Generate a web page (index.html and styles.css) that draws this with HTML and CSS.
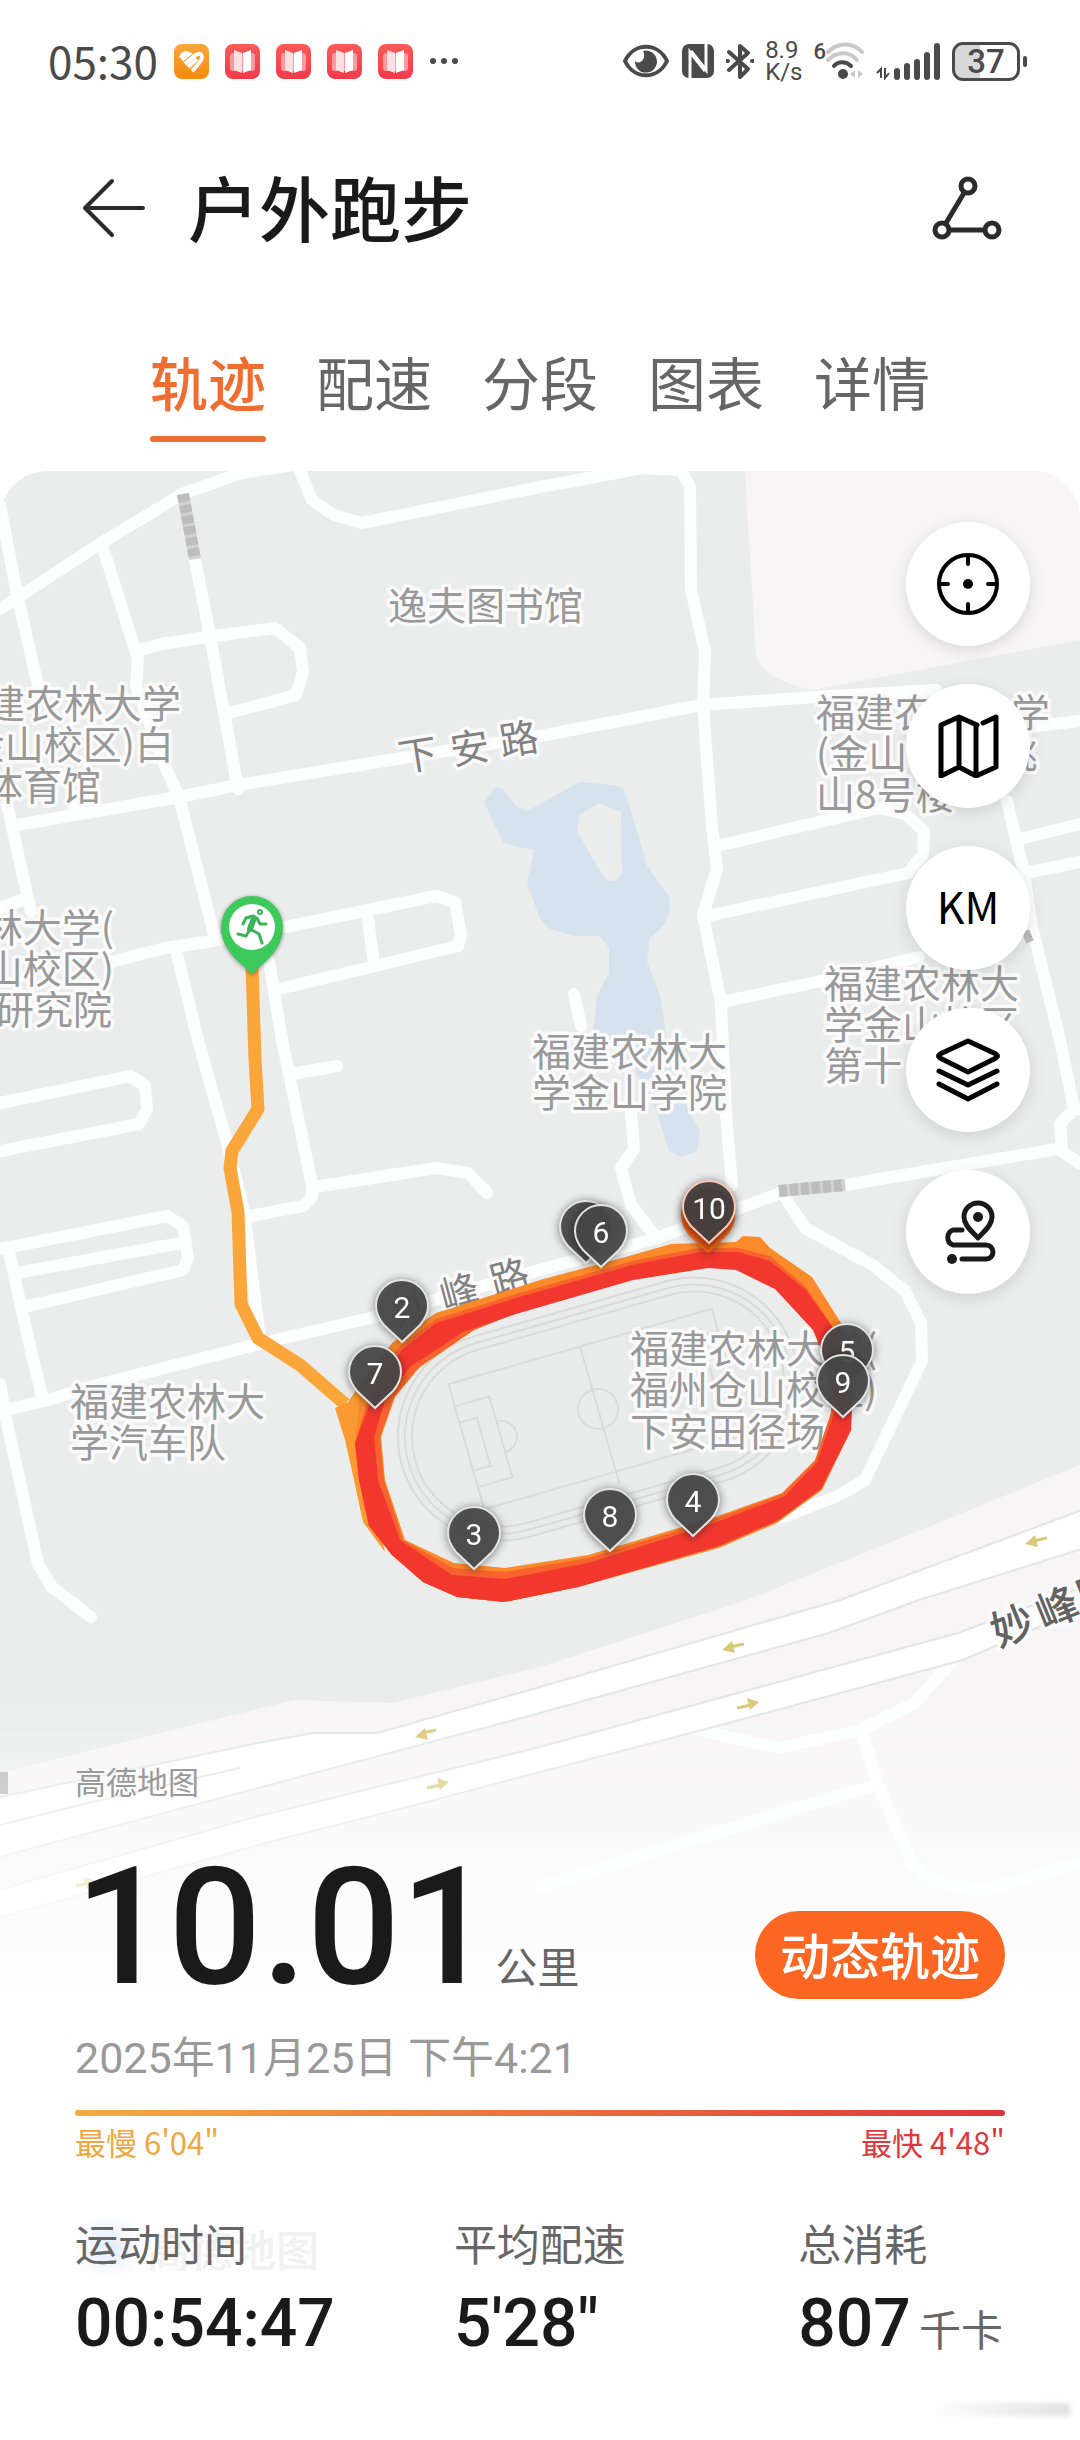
FILE: index.html
```html
<!DOCTYPE html>
<html lang="zh-CN">
<head>
  <meta charset="UTF-8">
  <meta name="viewport" content="width=device-width, initial-scale=1.0">
  <title>户外跑步</title>
  <link rel="stylesheet" href="styles.css">
</head>
<body>
  <svg class="defs" width="0" height="0" aria-hidden="true">
    <defs>
      <linearGradient id="redApp" x1="0" y1="0" x2="0" y2="1">
        <stop offset="0" stop-color="#fb5a57"/>
        <stop offset="1" stop-color="#f23a4b"/>
      </linearGradient>
      <linearGradient id="orangeApp" x1="0" y1="0" x2="0" y2="1">
        <stop offset="0" stop-color="#f7a63c"/>
        <stop offset="1" stop-color="#f58a0c"/>
      </linearGradient>
      <symbol id="book" viewBox="0 0 35 35">
        <rect width="35" height="35" rx="8" fill="url(#redApp)"/>
        <rect x="5" y="9" width="25" height="18" rx="3" fill="#fb9aa0"/>
        <path d="M9 6l8 3v20l-8-3z" fill="#ffdfe2"/>
        <path d="M26 6l-8 3v20l8-3z" fill="#fff"/>
      </symbol>
      <symbol id="pin" viewBox="-40 -40 80 90" overflow="visible">
        <path d="M0 35L-18 18C-23 12-26 6-26-1A26 26 0 0 1 26-1C26 6 23 12 18 18Z"/>
      </symbol>
    </defs>
  </svg>

  <div class="statusbar">
    <div class="status-left">
      <span class="time">05:30</span>
      <svg class="app" viewBox="0 0 35 35">
        <rect width="35" height="35" rx="8" fill="url(#orangeApp)"/>
        <path d="M7 14Q9 7 15 10L8 16M11 20L20 12Q27 7 28 13Q28 17 18 27M14 23L23 15" stroke="#fff" stroke-width="4" fill="none"/>
      </svg>
      <svg class="app"><use href="#book"/></svg>
      <svg class="app"><use href="#book"/></svg>
      <svg class="app"><use href="#book"/></svg>
      <svg class="app"><use href="#book"/></svg>
      <svg class="dots" width="30" height="8" viewBox="0 0 30 8" fill="#4a4a4a">
        <circle cx="4" cy="4" r="3"/><circle cx="15" cy="4" r="3"/><circle cx="26" cy="4" r="3"/>
      </svg>
    </div>
    <div class="status-right">
      <svg width="48" height="36" viewBox="0 0 48 36">
        <path d="M3 18C12-1 36-1 45 18C36 37 12 37 3 18Z" fill="none" stroke="#4a4a4a" stroke-width="4"/>
        <path d="M21 8a11 11 0 1 1-8 10c5 5 12-3 8-10z" fill="#4a4a4a"/>
      </svg>
      <svg width="34" height="36" viewBox="0 0 34 36">
        <rect x="1" y="1" width="32" height="34" rx="7" fill="#4a4a4a"/>
        <path d="M9 35V9l15 19M25 1v26L10 8" fill="none" stroke="#fff" stroke-width="3"/>
      </svg>
      <svg width="28" height="36" viewBox="0 0 28 36" fill="none" stroke="#4a4a4a" stroke-width="4" stroke-linejoin="round" stroke-linecap="round">
        <path d="M3 9l19 17-8 8V3l8 7L3 27"/>
        <path d="M1 18h1M26 18h1"/>
      </svg>
      <div class="speed"><span>8.9</span><span>K/s</span></div>
      <div class="wifi">
        <span>6</span>
        <svg width="38" height="38" viewBox="1 0 38 38" fill="none" stroke-linecap="round">
          <path d="M3 10C13 0 28 0 37 10M3 18C12 9 25 9 32 18" stroke="#c9c9c9" stroke-width="4"/>
          <path d="M9 24c4-5 12-5 17 0" stroke="#4a4a4a" stroke-width="4"/>
          <circle cx="18" cy="32" r="5" fill="#4a4a4a"/>
          <path d="M30 28v8l-5-4zM33 28v8l5-4z" fill="#c9c9c9"/>
        </svg>
      </div>
      <svg width="66" height="38" viewBox="0 0 66 38" stroke="#4a4a4a" fill="none">
        <path d="M6 36V27l-4 4M10 26v10l4-5" stroke-width="2"/>
        <path d="M22 29v6M32 24v11M42 20v15M52 13v22M62 4v31" stroke-width="6" stroke-linecap="round"/>
      </svg>
      <div class="battery"><span>37</span></div>
    </div>
  </div>

  <header class="header">
    <button class="icon-btn" aria-label="返回">
      <svg width="64" height="60" viewBox="0 0 64 60" fill="none" stroke="#2b2b2b" stroke-width="4" stroke-linecap="round" stroke-linejoin="round">
        <path d="M30 3L3 30L30 57M3 30h58"/>
      </svg>
    </button>
    <h1>户外跑步</h1>
    <button class="icon-btn share" aria-label="分享">
      <svg width="70" height="64" viewBox="0 0 70 64" fill="none" stroke="#2b2b2b" stroke-width="5">
        <circle cx="36" cy="10" r="7"/><circle cx="10" cy="54" r="7"/><circle cx="60" cy="54" r="7"/>
        <path d="M32 17L14 47M18 54h34"/>
      </svg>
    </button>
  </header>

  <nav class="tabs">
    <a href="#track" class="active">轨迹</a>
    <a href="#pace">配速</a>
    <a href="#split">分段</a>
    <a href="#chart">图表</a>
    <a href="#detail">详情</a>
  </nav>

  <main class="map" id="track">
    <svg class="map-canvas" viewBox="0 471 1080 1969" preserveAspectRatio="xMidYMin slice">
      <rect y="471" width="1080" height="1969" fill="#ebedec"/>
      <path class="land" d="M745 471L756 657Q765 680 812 690L1080 640V471Z"/>
      <path class="land" d="M1080 1465L884 1545L747 1600L540 1667L393 1703L294 1700L0 1773V2440H1080Z"/>

      <!-- 湖 -->
      <path fill="#d6e2ee" fill-rule="evenodd" d="M496 787L484 802L503 843L534 850L527 883L540 919L550 929L574 936H600L609 948V973L597 996L593 1034L630 1060L657 1113L669 1151L681 1157L697 1151L700 1132L688 1109L668 1060L664 1019L660 996L647 961L650 938L664 925L670 912L669 896L647 866L635 824L624 789L614 785L580 782L540 804L527 811L516 806L503 789Z
        M599 803L621 812L622 873L616 881H607L597 866L577 831L580 814Z"/>

      <!-- 小路 -->
      <g class="road">
        <path d="M0 609L17 598L103 542L182 494L241 473L293 465"/>
        <path d="M0 505L17 594L38 686"/>
        <path d="M103 548L138 659L136 686L165 766L179 797L215 938"/>
        <path d="M195 560L210 636L238 789"/>
        <path d="M136 651L162 644L207 637L275 628L300 648L303 672L296 695L229 713"/>
        <path d="M17 825L179 797L238 785L396 759L540 736L702 705L815 697L936 690L960 735L1080 721"/>
        <path d="M300 471L312 500L334 515L362 523L540 487L643 468L681 470L690 487L691 590L705 651L703 705L712 827L717 869L703 915L721 1003L726 1113L732 1185"/>
        <path d="M721 845L879 808L905 814L924 831L923 854L908 873L712 915"/>
        <path d="M726 1001L826 980L919 957"/>
        <path d="M1007 801L1024 873L1032 927L1060 1040L1074 1109L1060 1124L1062 1151L1080 1164M1074 1109H1084"/>
        <path d="M1019 839L1080 824M1026 873L1080 862"/>
        <path d="M7 804L31 912M0 908L28 898M72 800L75 812"/>
        <path d="M114 961L165 948L220 940M286 927L436 896L455 902L461 935L458 946L275 990M367 912L374 965"/>
        <path d="M177 954L198 1040L227 1143L244 1212L260 1338"/>
        <path d="M269 961L282 1040L312 1185V1197L303 1206L251 1216M291 1074L337 1066"/>
        <path d="M315 1187L436 1168L468 1173L487 1193"/>
        <path d="M0 1103L131 1076L145 1086L147 1109L139 1124L0 1151"/>
        <path d="M0 1249L167 1216L183 1226L188 1258L183 1270L28 1306M17 1273L181 1243M9 1252L28 1338L43 1400"/>
        <path d="M0 1411L48 1400L93 1386L275 1340L375 1317L540 1270L654 1239L781 1193M845 1185L1057 1149"/>
        <path d="M0 1384L7 1423L38 1564L52 1587L91 1617"/>
        <path d="M574 994L581 1026M631 1113L634 1149L621 1168L631 1205L657 1239"/>
        <path d="M786 1199L805 1228L874 1266L905 1291L921 1323L922 1361L865 1480L840 1495L781 1518"/>
        <path d="M698 1730L778 1748L860 1730L915 1703L953 1660M862 1733L879 1787L912 1863L936 1883L984 1890L1080 1863M877 1785L781 1813L540 1887"/>
      </g>
      <g fill="none" stroke-width="12">
        <path d="M183 494L195 559M779 1191L845 1185" stroke="#d2d2d2"/>
        <path d="M183 494L195 559M779 1191L845 1185M1024 938L1034 934" stroke="#bdbdbd" stroke-dasharray="8 3"/>
      </g>

      <!-- 妙峰路主路 -->
      <g class="highway">
        <path d="M-5 1798L258 1743L313 1733H377L540 1687L840 1600L1085 1509V1548L919 1600L829 1633L540 1713L-5 1858Z"/>
        <path d="M-5 1891L255 1817L540 1747L958 1633L1085 1586V1606L1039 1627L963 1660L691 1733L540 1772L396 1810L269 1842L-5 1919Z"/>
        <path d="M0 1825L80 1805L240 1768" fill="none"/>
      </g>
      <rect x="-4" y="1772" width="12" height="22" fill="#b5b5b5"/>
      <g fill="none" stroke="#d9c877" stroke-width="3">
        <path d="M1047 1538l-14 3M744 1644l-14 3M436 1730l-14 3M737 1708l14-3M427 1788l14-3M76 1886l12-3"/>
      </g>
      <g fill="#d9c877">
        <path d="M1025 1544l10-9 3 12zM722 1650l10-9 3 12zM415 1737l10-9 3 12z"/>
        <path d="M759 1702l-12-4 3 12zM449 1782l-12-4 3 12zM96 1881l-12-4 3 12z"/>
      </g>

      <!-- 田径场 -->
      <g class="field" transform="translate(598 1409) rotate(-16)">
        <rect x="-204" y="-104" width="408" height="208" rx="104" fill="#e9ebea"/>
        <rect x="-197" y="-97" width="394" height="194" rx="97"/>
        <rect x="-190" y="-90" width="380" height="180" rx="90"/>
        <rect x="-137" y="-65" width="274" height="130"/>
        <path d="M0-65V78M-137-42h36v84h-36M-137-25h18v50h-18M-101-16a16 16 0 0 1 0 32M137-42h-36v84h36M137-25h-18v50h18"/>
        <circle r="20"/>
      </g>

      <!-- 地名 -->
      <g class="label">
        <text x="388" y="620">逸夫图书馆</text>
        <text class="end" x="181" y="718">福建农林大学</text>
        <text class="end" x="174" y="759">(金山校区)白</text>
        <text class="end" x="101" y="800">体育馆</text>
        <text class="end" x="114" y="942">福建农林大学(</text>
        <text class="end" x="114" y="983">金山校区)</text>
        <text class="end" x="112" y="1024">研究院</text>
        <text x="816" y="727">福建农林大学</text>
        <text x="816" y="768">(金山校区)桃</text>
        <text x="816" y="809">山8号楼</text>
        <text x="824" y="998">福建农林大</text>
        <text x="824" y="1039">学金山校区</text>
        <text x="824" y="1080">第十</text>
        <text x="532" y="1066">福建农林大</text>
        <text x="532" y="1107">学金山学院</text>
        <text x="70" y="1416">福建农林大</text>
        <text x="70" y="1457">学汽车队</text>
        <text x="630" y="1363">福建农林大学(</text>
        <text x="630" y="1404">福州仓山校区)</text>
        <text x="630" y="1446">下安田径场</text>
      </g>
      <g class="label street">
        <text transform="translate(420 769) rotate(-9)">下</text>
        <text transform="translate(472 762) rotate(-9)">安</text>
        <text transform="translate(521 753) rotate(-9)">路</text>
        <text transform="translate(415 1322) rotate(-15)">妙</text>
        <text transform="translate(463 1306) rotate(-15)">峰</text>
        <text transform="translate(513 1291) rotate(-15)">路</text>
      </g>
      <g class="label street main-street">
        <text transform="translate(1018 1640) rotate(-22)">妙</text>
        <text transform="translate(1063 1622) rotate(-22)">峰</text>
        <text transform="translate(1104 1606) rotate(-22)">路</text>
      </g>

      <!-- 跑步轨迹 -->
      <path d="M252 965L255 1060L258 1109L232 1151L230 1168L238 1212L241 1304L258 1338L300 1365L345 1404" fill="none" stroke="#fba63b" stroke-width="13" stroke-linejoin="round"/>
      <path fill="#fb9a32" d="M335 1408L348 1402L361 1383L380 1372L372 1500L385 1552L363 1522L354 1480L345 1440Z"/>
      <path fill="#fb8a2a" fill-rule="evenodd" d="M355 1443L359 1480L369 1526L392 1555L423 1582L457 1597L504 1602L578 1587L719 1548L777 1523L822 1490L851 1430L853 1384L841 1323L812 1277L770 1248L760 1237L743 1236L736 1242L671 1244L622 1258L540 1280L436 1313L392 1343L361 1383Z
        M381 1437L385 1480L405 1540L454 1563L505 1568L588 1555L712 1518L782 1493L815 1460L831 1413L833 1384L815 1327L777 1287L736 1269L708 1267L633 1278L516 1313L474 1330L419 1368L395 1397Z"/>
      <path fill="#f7622d" fill-rule="evenodd" d="M355 1443L359 1480L369 1526L392 1555L423 1582L457 1597L504 1602L578 1587L719 1546L777 1521L821 1489L851 1430L852 1384L838 1335L806 1287L770 1256L738 1248L700 1248L636 1260L516 1294L436 1319L398 1348L370 1393Z
        M380 1437L384 1480L403 1540L453 1568L505 1572L588 1558L712 1520L782 1494L815 1461L831 1413L833 1384L814 1328L776 1288L736 1269L708 1267L633 1279L516 1313L474 1330L419 1367L394 1397Z"/>
      <path fill="#f2372f" fill-rule="evenodd" d="M355 1443L359 1480L369 1526L392 1555L423 1582L457 1597L504 1602L578 1587L719 1546L777 1521L821 1489L851 1430L852 1384L838 1335L806 1290L770 1261L738 1252L700 1252L636 1264L516 1298L436 1323L402 1350L374 1393Z
        M374 1437L378 1480L400 1540L452 1575L505 1579L588 1563L712 1524L785 1496L817 1462L834 1413L835 1384L813 1330L775 1289L736 1270L708 1268L633 1280L516 1314L463 1332L410 1367L385 1400Z"/>

      <g class="pins">
        <g transform="translate(586 1228)"><use href="#pin" x="-40" y="-40" width="80" height="90"/></g>
        <g class="hot" transform="translate(708 1217)"><use href="#pin" x="-40" y="-40" width="80" height="90"/></g>
        <g transform="translate(601 1232)"><use href="#pin" x="-40" y="-40" width="80" height="90"/><text y="11">6</text></g>
        <g class="last" transform="translate(709 1208)"><use href="#pin" x="-40" y="-40" width="80" height="90"/><text y="11">10</text></g>
        <g transform="translate(402 1307)"><use href="#pin" x="-40" y="-40" width="80" height="90"/><text y="11">2</text></g>
        <g transform="translate(375 1373)"><use href="#pin" x="-40" y="-40" width="80" height="90"/><text y="11">7</text></g>
        <g transform="translate(474 1534)"><use href="#pin" x="-40" y="-40" width="80" height="90"/><text y="11">3</text></g>
        <g transform="translate(610 1516)"><use href="#pin" x="-40" y="-40" width="80" height="90"/><text y="11">8</text></g>
        <g transform="translate(693 1501)"><use href="#pin" x="-40" y="-40" width="80" height="90"/><text y="11">4</text></g>
        <g transform="translate(847 1351)"><use href="#pin" x="-40" y="-40" width="80" height="90"/><text y="11">5</text></g>
        <g transform="translate(843 1382)"><use href="#pin" x="-40" y="-40" width="80" height="90"/><text y="11">9</text></g>
      </g>

      <!-- 起点 -->
      <g class="start" transform="translate(252 927)">
        <path d="M0 48C-4 40-31 27-31 0A31 31 0 0 1 31 0C31 27 4 40 0 48Z" fill="#3ec95c"/>
        <circle r="23" fill="#fff"/>
        <g fill="none" stroke="#3bb458" stroke-linecap="round" stroke-linejoin="round">
          <circle cx="8" cy="-15" r="1" stroke-width="4"/>
          <path d="M2-9L-2 2" stroke-width="6"/>
          <path d="M1-11L-6-9L-9-3M5-9L8-3L14-3M0 3L7 7L10 16M-3 4L-6 9L-14 7" stroke-width="3"/>
        </g>
      </g>
    </svg>

    <div class="tools">
      <button aria-label="定位">
        <svg width="64" height="64" viewBox="0 0 64 64" fill="none" stroke="#000" stroke-width="4" stroke-linecap="round">
          <circle cx="32" cy="32" r="29"/>
          <path d="M32 4v8M32 52v8M4 32h8M52 32h8"/>
          <circle cx="32" cy="32" r="5" fill="#000" stroke="none"/>
        </svg>
      </button>
      <button aria-label="地图类型">
        <svg width="64" height="64" viewBox="0 0 64 64" fill="none" stroke="#000" stroke-width="5" stroke-linecap="round" stroke-linejoin="round">
          <path d="M41 11L23 3L5 11V62L23 53L40 62V11M23 3V53M40 62L60 53V3L47 9"/>
        </svg>
      </button>
      <button class="km">KM</button>
      <button aria-label="图层">
        <svg width="64" height="64" viewBox="0 0 64 64" fill="none" stroke="#000" stroke-width="5" stroke-linecap="round" stroke-linejoin="round">
          <path d="M32 3L60 16Q63 18 60 20L32 34L4 20Q1 18 4 16ZM3 33L32 47L61 33M3 46L32 61L61 46"/>
        </svg>
      </button>
      <button aria-label="路线">
        <svg width="64" height="64" viewBox="0 0 64 64" fill="none" stroke="#1a1a1a" stroke-width="5" stroke-linecap="round" stroke-linejoin="round">
          <path d="M42 38C37 32 28 26 28 17A14 14 0 0 1 56 17C56 26 47 32 42 38Z"/>
          <circle cx="42" cy="17" r="5" fill="#1a1a1a" stroke="none"/>
          <path d="M26 30H17a8 8 0 0 0 0 15H50a7 7 0 0 1 0 14H26"/>
          <circle cx="16" cy="59" r="5" fill="#1a1a1a" stroke="none"/>
        </svg>
      </button>
    </div>

    <section class="panel">
      <p class="credit">高德地图</p>
      <div class="distance">
        <p><strong>10.01</strong> <span>公里</span></p>
        <button class="play">动态轨迹</button>
      </div>
      <p class="date">2025年11月25日 下午4:21</p>
      <div class="pace-bar"></div>
      <div class="pace">
        <span class="slow">最慢 6'04"</span>
        <span class="fast">最快 4'48"</span>
      </div>
      <dl class="stats">
        <div class="watermarked">
          <dt>运动时间</dt>
          <dd>00:54:47</dd>
          <span class="watermark" aria-hidden="true">高德地图</span>
        </div>
        <div>
          <dt>平均配速</dt>
          <dd>5'28"</dd>
        </div>
        <div>
          <dt>总消耗</dt>
          <dd>807<small>千卡</small></dd>
        </div>
      </dl>
      <div class="smudge"></div>
    </section>
  </main>
</body>
</html>
```
FILE: styles.css
```css
* {
  box-sizing: border-box;
  margin: 0;
  padding: 0;
}
body {
  font-family: "Noto Sans CJK SC", sans-serif;
  background-color: #fefefe;
  color: #1a1a1a;
  min-height: 100vh;
  display: flex;
  flex-direction: column;
}
button {
  font-family: inherit;
  border: none;
  cursor: pointer;
}
svg {
  display: block;
  flex: none;
}
.defs {
  position: absolute;
}

/* 数字字体 */
.speed,
.wifi,
.battery,
.distance strong,
.date,
.stats dd,
.pins text {
  font-family: Roboto, "Noto Sans CJK SC", sans-serif;
}

/* 状态栏 */
.statusbar {
  display: flex;
  justify-content: space-between;
  align-items: center;
  height: 122px;
  padding: 0 52px 0 48px;
  color: #4a4a4a;
}
.status-left {
  display: flex;
  align-items: center;
  gap: 16px;
}
.time {
  font-size: 44px;
  line-height: 44px;
  padding-bottom: 2px;
}
.app {
  width: 35px;
  height: 35px;
}
.status-right {
  display: flex;
  align-items: center;
  gap: 11px;
}
.speed {
  display: flex;
  flex-direction: column;
  font-size: 24px;
  line-height: 22px;
}
.wifi {
  display: flex;
  align-items: flex-start;
  font-size: 22px;
  font-weight: 500;
  line-height: 20px;
}
.battery {
  position: relative;
  width: 68px;
  height: 39px;
  margin-right: 8px;
  border: 3px solid #4a4a4a;
  border-radius: 11px;
  background: linear-gradient(to right, #d8d8d8 40%, #fefefe 40%);
  font-size: 33px;
  font-weight: 500;
  line-height: 34px;
  text-align: center;
}
.battery::after {
  content: "";
  position: absolute;
  right: -10px;
  top: 11px;
  width: 4px;
  height: 11px;
  border-radius: 2px;
  background-color: #4a4a4a;
}

/* 标题 */
.header {
  display: flex;
  align-items: center;
  height: 172px;
  padding: 0 78px 0 82px;
}
.header h1 {
  font-size: 71px;
  font-weight: 500;
  line-height: 84px;
  margin-left: 42px;
  padding-bottom: 6px;
}
.icon-btn {
  background: none;
}
.share {
  margin-left: auto;
}

/* 标签页 */
.tabs {
  display: flex;
  justify-content: center;
  gap: 50px;
  padding: 48px 0 29px;
}
.tabs a {
  font-size: 58px;
  line-height: 78px;
  padding-bottom: 22px;
  color: #666;
  text-decoration: none;
}
.tabs .active {
  position: relative;
  color: #ee6d31;
  font-weight: 500;
}
.tabs .active::after {
  content: "";
  position: absolute;
  left: 0;
  right: 0;
  bottom: 0;
  height: 6px;
  border-radius: 3px;
  background-color: #ee6d31;
}

/* 地图 */
.map {
  position: relative;
  flex: 1;
  display: flex;
  flex-direction: column;
  justify-content: space-between;
  border-radius: 48px 48px 0 0;
  overflow: hidden;
}
.map-canvas {
  position: absolute;
  inset: 0;
  width: 100%;
  height: 100%;
}
.land {
  fill: #f7f5f6;
}
.road {
  fill: none;
  stroke: #fdfefe;
  stroke-width: 12px;
  stroke-linecap: round;
  stroke-linejoin: round;
}
.highway {
  fill: #fefefe;
  stroke: #e3e6e4;
  stroke-width: 2px;
}
.field {
  fill: none;
  stroke: #d9dbda;
  stroke-width: 2px;
}
.label {
  font-size: 39px;
  fill: #999;
  stroke: #fafafa;
  stroke-width: 7px;
  stroke-linejoin: round;
  paint-order: stroke;
}
.end {
  text-anchor: end;
}
.street {
  fill: #828282;
  text-anchor: middle;
}
.main-street {
  fill: #626262;
  font-size: 42px;
  font-weight: 500;
}
.pins g {
  fill: #484848;
  fill-opacity: 0.93;
  stroke: #e4e4e4;
  stroke-width: 2px;
  filter: drop-shadow(0 1px 4px rgba(0, 0, 0, 0.5));
}
.pins .hot {
  fill: #d94f10;
  stroke: #e8601c;
}
.pins .last {
  fill: #443f3e;
  stroke: #fbc9b6;
}
.pins text {
  fill: #fff;
  fill-opacity: 1;
  stroke: none;
  font-size: 30px;
  text-anchor: middle;
}
.start {
  filter: drop-shadow(0 1px 2px rgba(0, 0, 0, 0.4));
}

.tools {
  position: relative;
  align-self: flex-end;
  display: flex;
  flex-direction: column;
  gap: 38px;
  padding: 51px 50px 0 0;
}
.tools button {
  display: flex;
  align-items: center;
  justify-content: center;
  width: 124px;
  height: 124px;
  border-radius: 50%;
  background-color: #fff;
  box-shadow: 0 4px 16px rgba(0, 0, 0, 0.12);
}
.tools .km {
  padding-bottom: 6px;
  font-size: 43px;
  color: #000;
}

/* 数据面板 */
.panel {
  position: relative;
  padding: 61px 75px 76px;
  background: linear-gradient(rgba(254, 254, 254, 0), rgba(254, 254, 254, 0.7) 180px, rgba(254, 254, 254, 0.97) 310px, #fefefe);
}
.credit {
  font-size: 31px;
  line-height: 40px;
  color: #999;
}
.distance {
  display: flex;
  justify-content: space-between;
  align-items: flex-end;
  margin-top: 54px;
}
.distance p {
  display: flex;
  align-items: baseline;
  gap: 2px;
}
.distance strong {
  font-size: 164px;
  font-weight: 500;
  line-height: 144px;
}
.distance span {
  font-size: 42px;
  line-height: 42px;
  color: #666;
}
.play {
  height: 88px;
  padding: 0 25px 4px;
  border-radius: 44px;
  background-color: #fb6622;
  color: #fff;
  font-size: 50px;
  font-weight: 500;
  line-height: 84px;
}
.date {
  margin-top: 29px;
  font-size: 43px;
  line-height: 60px;
  color: #999;
}
.pace-bar {
  height: 6px;
  margin-top: 22px;
  border-radius: 3px;
  background: linear-gradient(to right, #f5ab40, #ea6b3c 55%, #dc353c);
}
.pace {
  display: flex;
  justify-content: space-between;
  margin-top: 6px;
  font-size: 31px;
  line-height: 40px;
}
.slow {
  color: #eda842;
}
.fast {
  color: #dc3a40;
}
.stats {
  position: relative;
  z-index: 0;
  display: grid;
  grid-template-columns: 11fr 10fr 6fr;
  margin-top: 50px;
}
.stats dt {
  font-size: 43px;
  line-height: 60px;
  color: #666;
}
.stats dd {
  margin-top: 12px;
  font-size: 66px;
  font-weight: 500;
  line-height: 80px;
  white-space: nowrap;
}
.stats small {
  margin-left: 8px;
  font-size: 42px;
  font-weight: 400;
  line-height: 42px;
  color: #666;
}
.watermarked {
  position: relative;
}
.watermark {
  position: absolute;
  z-index: -1;
  left: 0;
  top: 8px;
  padding-left: 72px;
  font-size: 43px;
  line-height: 56px;
  font-weight: 500;
  color: #f1f1f1;
  background: radial-gradient(circle at 34px 26px, #e2ecfb, rgba(254, 254, 254, 0) 34px);
}
.smudge {
  position: absolute;
  right: 10px;
  bottom: 24px;
  width: 140px;
  height: 13px;
  background: linear-gradient(to right, rgba(254, 254, 254, 0), #e2e2e2);
  filter: blur(2px);
}
```
